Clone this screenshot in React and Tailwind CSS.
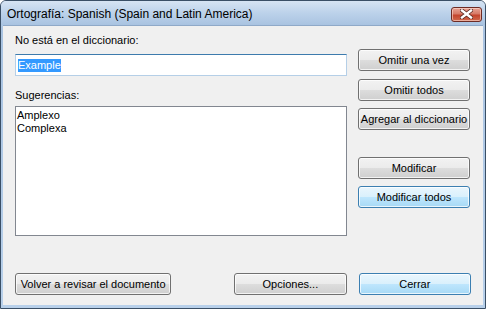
import React from "react";

function Btn({ children, w = "w-[112px]", variant = "normal", className = "" }) {
  const base =
    "h-[22px] rounded-[3px] border flex items-center justify-center text-[11px] leading-none text-black shadow-[inset_0_0_0_1px_rgba(255,255,255,0.75)]";
  const styles = {
    normal:
      "border-[#707070] bg-[linear-gradient(to_bottom,#f2f2f2_0%,#ebebeb_50%,#dddddd_51%,#cfcfcf_100%)]",
    hot:
      "border-[#3c7fb1] bg-[linear-gradient(to_bottom,#eaf6fd_0%,#d9f0fc_50%,#bee6fd_51%,#a7d9f5_100%)]",
    def:
      "border-[#3c7fb1] shadow-[inset_0_0_0_1px_#48d8fb] bg-[linear-gradient(to_bottom,#eaf6fd_0%,#d9f0fc_50%,#bee6fd_51%,#a7d9f5_100%)]",
  };
  return <div className={`${base} ${styles[variant]} ${w} ${className}`}>{children}</div>;
}

export default function App() {
  return (
    <div
      className="w-[486px] h-[309px] flex flex-col border border-[#3a4f66] rounded-t-[6px] overflow-hidden bg-[linear-gradient(to_bottom,#c4d8ee,#a9c3e1_30px,#b8d0ea)]"
      style={{ fontFamily: '"Liberation Sans", Arial, sans-serif' }}
    >
      {/* title bar */}
      <div className="h-[24px] shrink-0 flex items-center justify-between pl-[6px] pr-[3px] bg-[linear-gradient(to_bottom,#d6e4f3,#bcd2ea_50%,#a9c3e1)]">
        <span className="text-[12px] text-black leading-none mt-[2px]">
          Ortografía: Spanish (Spain and Latin America)
        </span>
        <div className="w-[31px] h-[15px] mt-[2px] rounded-[3px] border border-[#6d2b24] flex items-center justify-center bg-[linear-gradient(to_bottom,#e8a395_0%,#d67a67_45%,#c4442d_55%,#cf6a4e_100%)] shadow-[inset_0_0_0_1px_rgba(255,220,210,0.6)]">
          <svg width="13" height="10" viewBox="0 0 13 10">
            <path
              d="M2 1.5 L11 8.5 M11 1.5 L2 8.5"
              stroke="#5a2a22"
              strokeWidth="4"
              strokeLinecap="square"
            />
            <path
              d="M2 1.5 L11 8.5 M11 1.5 L2 8.5"
              stroke="#ffffff"
              strokeWidth="2.4"
              strokeLinecap="square"
            />
          </svg>
        </div>
      </div>

      {/* client area */}
      <div className="flex-1 mx-[2px] mb-[3px] bg-[#f0f0f0] border-t border-[#8fa9c8] flex flex-col pl-[12px] pr-[12px] pt-[8px] text-[11px] text-black">
        <div className="flex">
          {/* left column */}
          <div className="w-[332px] flex flex-col">
            <div className="h-[13px] leading-[13px]">No está en el diccionario:</div>
            <div className="mt-[7px] h-[22px] bg-white border border-[#b5cfe7] border-t-[#3d7bad] flex items-center pl-[2px]">
              <span className="bg-[#3399ff] text-white leading-[13px]">Example</span>
            </div>
            <div className="mt-[13px] h-[13px] leading-[13px]">Sugerencias:</div>
            <div className="mt-[4px] h-[130px] bg-white border border-[#828790] pl-[1px] pt-[2px] leading-[13px]">
              <div>Amplexo</div>
              <div>Complexa</div>
            </div>
          </div>
          {/* right column */}
          <div className="ml-[11px] flex flex-col pt-[15px]">
            <Btn>Omitir una vez</Btn>
            <Btn className="mt-[8px]">Omitir todos</Btn>
            <Btn className="mt-[7px]">Agregar al diccionario</Btn>
            <Btn className="mt-[27px]">Modificar</Btn>
            <Btn className="mt-[7px]" variant="hot">Modificar todos</Btn>
          </div>
        </div>
        <div className="mt-[37px] flex">
          <Btn w="w-[157px]">Volver a revisar el documento</Btn>
          <Btn className="ml-[63px]" w="w-[113px]">Opciones...</Btn>
          <Btn className="ml-[12px]" w="w-[113px]" variant="def">Cerrar</Btn>
        </div>
      </div>
    </div>
  );
}
